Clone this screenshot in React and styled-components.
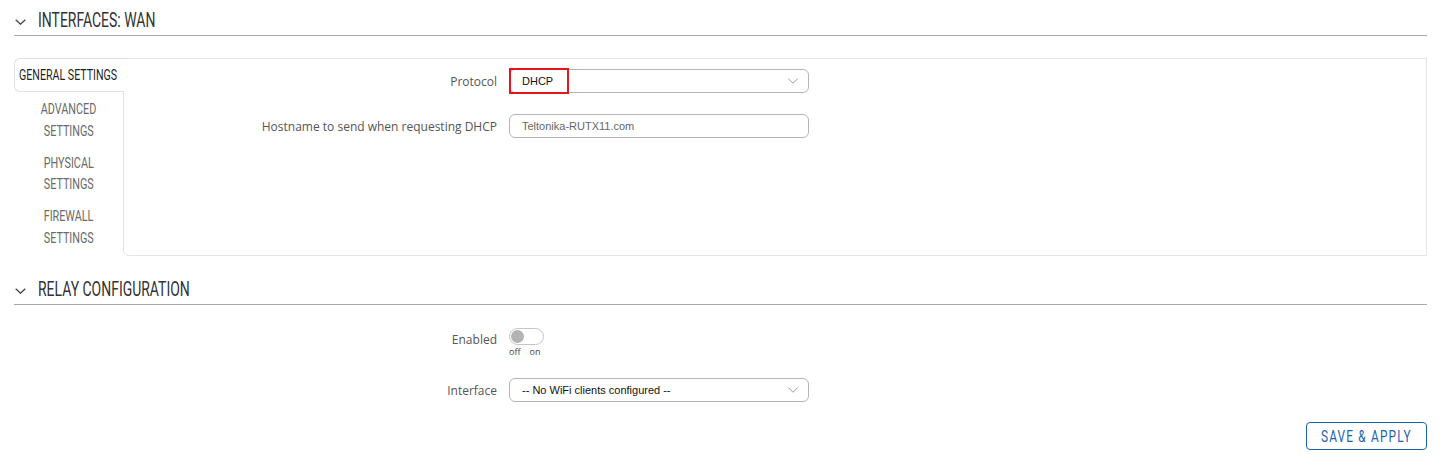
import React from 'react';
import styled, { createGlobalStyle } from 'styled-components';
import { ChevronDown } from 'lucide-react';

const GlobalStyle = createGlobalStyle`
  body {
    margin: 0;
    background: #fff;
    font-family: 'Open Sans', 'Liberation Sans', sans-serif;
  }
`;

// no condensed face is installed, so squeeze Roboto horizontally
const Narrow = styled.span`
  display: inline-block;
  vertical-align: top;
  font-family: Roboto, 'Liberation Sans', sans-serif;
  white-space: nowrap;
  transform: scaleX(${({ $scale }) => $scale || 0.72});
  transform-origin: ${({ $origin }) => $origin || 'left'} center;
`;

const Page = styled.div`
  padding: 0 27px 0 14px;
  width: 1413px;
`;

const SectionHeader = styled.div`
  display: flex;
  align-items: center;
  height: 35px;
  padding-top: ${({ $top }) => $top || 0}px;
  border-bottom: 1px solid #a9a9a9;
`;

const HeaderIcon = styled.svg`
  width: 11px;
  height: 6px;
  margin: 9px 12px 0 1px;
  fill: none;
  stroke: #444;
  stroke-width: 1.3;
`;

const HeaderTitle = styled.h2`
  margin: 4px 0 0;
  font-weight: 400;
  font-size: 21px;
  line-height: 26px;
  color: #333;
`;

const Tabs = styled.div`
  display: flex;
  margin-top: 22px;
`;

const TabList = styled.ul`
  list-style: none;
  margin: 0;
  padding: 0;
  width: 109px;
  flex: none;
`;

const Tab = styled.li`
  position: relative;
  z-index: 1;
  font-size: 15px;
  text-align: ${({ $active }) => ($active ? 'left' : 'center')};
  color: ${({ $active }) => ($active ? '#1f1f1f' : '#6a6a6a')};
  background: #fff;
  margin-right: ${({ $active }) => ($active ? '-1px' : '0')};
  border: ${({ $active }) => ($active ? '1px solid #e1e1e1' : 'none')};
  border-right: none;
  border-radius: 6px 0 0 6px;
  padding: ${({ $active }) => ($active ? '6px 0 0 4px' : '5px 0 5.5px')};
  height: ${({ $active }) => ($active ? '34px' : 'auto')};
  box-sizing: border-box;
  margin-bottom: ${({ $active }) => ($active ? '2px' : '0')};
`;

const TabLine = styled.div`
  height: ${({ $active }) => ($active ? 20 : 21.5)}px;
  line-height: ${({ $active }) => ($active ? 20 : 21.5)}px;
`;

const Panel = styled.div`
  flex: 1;
  height: 198px;
  box-sizing: border-box;
  border: 1px solid #e4e4e4;
  border-radius: 0 0 0 6px;
  padding-top: 10px;
`;

const Form = styled.div`
  display: flex;
  flex-direction: column;
  gap: ${({ $gap }) => $gap}px;
`;

const Row = styled.div`
  display: grid;
  grid-template-columns: ${({ $labelWidth }) => $labelWidth}px 300px;
  column-gap: 12px;
  align-items: ${({ $align }) => $align || 'center'};
`;

const Label = styled.label`
  text-align: right;
  font-size: 12px;
  color: #555;
  padding-top: ${({ $pad }) => $pad || 0}px;
`;

const Field = styled.div`
  position: relative;
  display: flex;
  align-items: center;
  height: 24px;
  box-sizing: border-box;
  border: 1px solid #b5b5b5;
  border-radius: 6px;
  padding: 0 12px;
  font-family: 'Liberation Sans', Arial, sans-serif;
  font-size: 11px;
  color: ${({ $muted }) => ($muted ? '#666' : '#111')};
`;

const Caret = styled.span`
  margin-left: auto;
  display: flex;
  color: #9a9a9a;
  margin-right: -6px;
`;

const Highlight = styled.span`
  position: absolute;
  left: -1px;
  top: -2px;
  width: 56px;
  height: 22px;
  border: 2px solid #e8141b;
`;

const ToggleWrap = styled.div`
  display: flex;
  flex-direction: column;
`;

const Switch = styled.span`
  display: flex;
  align-items: center;
  width: 35px;
  height: 17px;
  box-sizing: border-box;
  border: 1px solid #c5c5c5;
  border-radius: 9px;
  padding: 1px;
`;

const Knob = styled.span`
  width: 13px;
  height: 13px;
  border-radius: 50%;
  background: #b3b3b3;
`;

const SwitchText = styled.div`
  display: flex;
  gap: 9px;
  font-size: 9px;
  color: #444;
  line-height: 12px;
  padding-top: 1px;
`;

const Relay = styled.div`
  padding-top: 23px;
`;

const Footer = styled.div`
  display: flex;
  justify-content: flex-end;
  margin-top: 20px;
`;

const Button = styled.button`
  display: flex;
  align-items: center;
  justify-content: center;
  height: 28px;
  width: 121px;
  padding: 0;
  background: #fff;
  border: 1px solid #1b62b0;
  border-radius: 4px;
  color: #1b62b0;
  font-size: 16px;
  letter-spacing: 1.6px;
  cursor: pointer;
`;

const Select = ({ value, highlight }) => (
  <Field>
    {highlight && <Highlight />}
    {value}
    <Caret>
      <ChevronDown size={18} strokeWidth={1.3} />
    </Caret>
  </Field>
);

const Header = ({ title, top }) => (
  <SectionHeader $top={top}>
    <HeaderIcon viewBox="0 0 11 6">
      <path d="M0.7 0.7 L5.5 5.2 L10.3 0.7" />
    </HeaderIcon>
    <HeaderTitle>
      <Narrow $scale={0.665}>{title}</Narrow>
    </HeaderTitle>
  </SectionHeader>
);

const tabs = [
  ['GENERAL SETTINGS'],
  ['ADVANCED', 'SETTINGS'],
  ['PHYSICAL', 'SETTINGS'],
  ['FIREWALL', 'SETTINGS'],
];

export default function App() {
  return (
    <>
      <GlobalStyle />
      <Page>
        <Header title="INTERFACES: WAN" />
        <Tabs>
          <TabList>
            {tabs.map((lines, i) => (
              <Tab key={i} $active={i === 0}>
                {lines.map((l) => (
                  <TabLine key={l} $active={i === 0}>
                    <Narrow $scale={i === 0 ? 0.71 : 0.72} $origin={i === 0 ? 'left' : 'center'}>
                      {l}
                    </Narrow>
                  </TabLine>
                ))}
              </Tab>
            ))}
          </TabList>
          <Panel>
            <Form $gap={21}>
              <Row $labelWidth={373}>
                <Label>Protocol</Label>
                <Select value="DHCP" highlight />
              </Row>
              <Row $labelWidth={373}>
                <Label>Hostname to send when requesting DHCP</Label>
                <Field $muted>Teltonika-RUTX11.com</Field>
              </Row>
            </Form>
          </Panel>
        </Tabs>
        <Header title="RELAY CONFIGURATION" top={13} />
        <Relay>
          <Form $gap={20}>
            <Row $labelWidth={483} $align="start">
              <Label $pad={3}>Enabled</Label>
              <ToggleWrap>
                <Switch>
                  <Knob />
                </Switch>
                <SwitchText>
                  <span>off</span>
                  <span>on</span>
                </SwitchText>
              </ToggleWrap>
            </Row>
            <Row $labelWidth={483}>
              <Label>Interface</Label>
              <Select value="-- No WiFi clients configured --" />
            </Row>
          </Form>
        </Relay>
        <Footer>
          <Button>
            <Narrow $scale={0.74} $origin="center">SAVE &amp; APPLY</Narrow>
          </Button>
        </Footer>
      </Page>
    </>
  );
}
